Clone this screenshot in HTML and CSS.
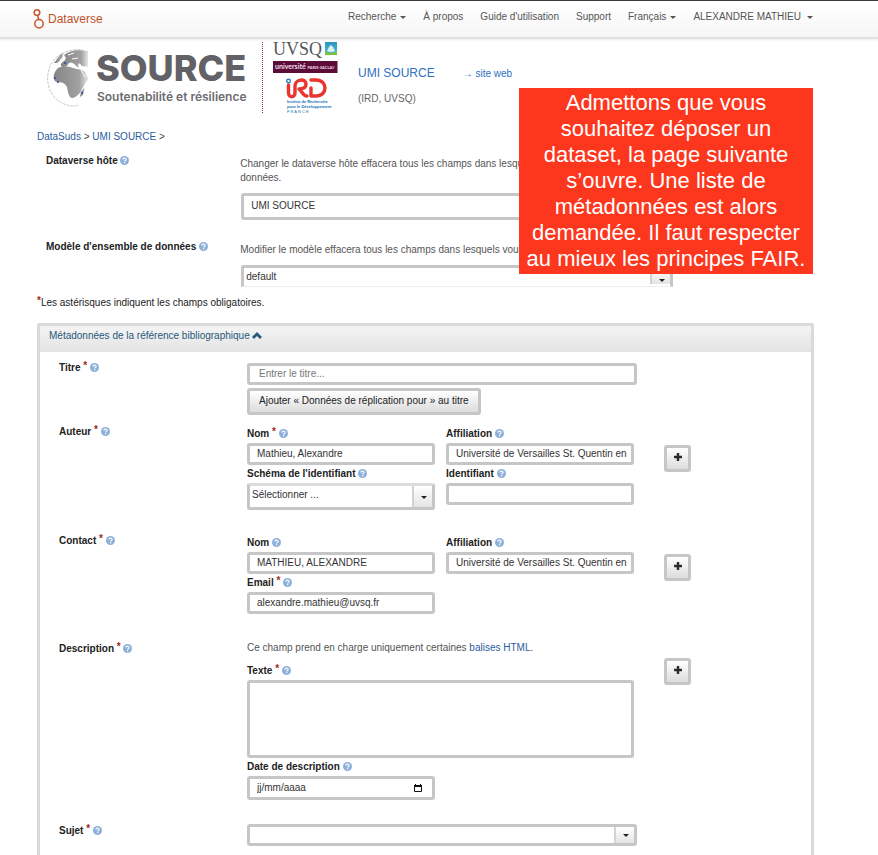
FILE: index.html
```html
<!DOCTYPE html>
<html lang="fr">
<head>
<meta charset="utf-8">
<meta name="viewport" content="width=device-width, initial-scale=1">
<title>Dataverse</title>
<link rel="stylesheet" href="styles.css">
</head>
<body>
<svg class="sprite" aria-hidden="true">
  <symbol id="help" viewBox="0 0 18 18">
    <circle cx="9" cy="9" r="9" fill="#8db0d9"/>
    <path d="M5.8 7.2C5.8 3.2 12.3 3.2 12.3 6.9C12.3 9 9.2 9 9.2 11" fill="none" stroke="#fff" stroke-width="2.2"/>
    <rect x="8" y="12.4" width="2.4" height="2.4" fill="#fff"/>
  </symbol>
  <symbol id="plus" viewBox="0 0 10 10">
    <path d="M5 1V9M1 5H9" fill="none" stroke="#2b2b2b" stroke-width="2.4"/>
  </symbol>
</svg>

<header class="topbar">
  <a class="brand" href="#">
    <svg class="brand-icon" viewBox="0 0 12 20" aria-hidden="true">
      <g fill="none" stroke="#c6532c" stroke-width="1.5">
        <circle cx="4" cy="3.6" r="2.8"/>
        <circle cx="6" cy="14.7" r="4.2"/>
        <path d="M4.6 6.4L5.6 10.5"/>
      </g>
    </svg>
    <span>Dataverse</span>
  </a>
  <nav class="menu">
    <a class="has-caret" href="#">Recherche</a>
    <a href="#">À propos</a>
    <a href="#">Guide d'utilisation</a>
    <a href="#">Support</a>
    <a class="has-caret" href="#">Français</a>
    <a class="has-caret has-caret-wide" href="#">ALEXANDRE MATHIEU</a>
  </nav>
</header>

<section class="banner">
  <svg class="logo" viewBox="0 0 296 78" role="img" aria-label="SOURCE, Soutenabilité et résilience">
    <defs>
      <linearGradient id="fade" x1="0" x2="1" y1="0" y2="0">
        <stop offset="0" stop-color="#858585"/>
        <stop offset="0.75" stop-color="#a2a2a2"/>
        <stop offset="1" stop-color="#e6e6e6"/>
      </linearGradient>
      <linearGradient id="sky" x1="0" x2="0" y1="0" y2="1">
        <stop offset="0" stop-color="#2c95bd"/>
        <stop offset="1" stop-color="#53c0da"/>
      </linearGradient>
    </defs>
    <path d="M43 12C30 6 13 12 6 24C-1 38 3 56 17 63C23 66 29 67 34 65" fill="none" stroke="#c9c9c9" stroke-width="1" stroke-dasharray="3 1"/>
    <g fill="url(#fade)">
      <path d="M19 15C25 10 34 9 43 12V27C40 25 38 28 36 25C34 22 32 24 34 28C30 25 27 21 24 23C22 27 18 28 16 26C15 22 20 22 21 18Z"/>
      <path d="M12 29C16 25 23 26 28 28C33 30 38 28 41 34C43 37 43 38 43 40C40 42 39 46 37 49C36 53 31 57 28 58C24 59 23 52 22 47C20 43 17 42 12 42C8 41 7 35 12 29Z"/>
      <path d="M36 52L40 47L38 55L35 57Z"/>
      <path d="M9 23L15 15L19 12L17 19L12 23Z"/>
    </g>
    <path d="M15 20L20 16M23 15L29 13M27 19L33 18M36 30L40 37" stroke="#fff" stroke-width="1" fill="none"/>
    <g fill="#1f4aa0"><circle cx="20" cy="23" r="1"/><circle cx="10" cy="38" r="1"/><circle cx="13" cy="42" r="1"/><circle cx="37" cy="53" r="1"/></g>
    <text class="logo-name" x="51" y="41">SOURCE</text>
    <text class="logo-tag" x="52" y="61">Soutenabilité et résilience</text>
    <path d="M217.500 2V74" stroke="#7b2a50" stroke-width="1" stroke-dasharray="1 1"/>
    <text class="logo-uvsq" x="228" y="15">UVSQ</text>
    <rect x="280" y="2" width="12" height="13" fill="url(#sky)"/>
    <path d="M280 11Q286 15 292 11V15H280Z" fill="#79c43c"/>
    <path d="M282 11L284 7L286 5L288 7L290 11Q286 13 282 11Z" fill="#d9f0f5"/>
    <rect x="228" y="21" width="64.500" height="12" fill="#5c0d37"/>
    <text class="logo-saclay" x="230" y="29">université <tspan class="logo-saclay-small">PARIS-SACLAY</tspan></text>
    <g fill="none" stroke="#e8352e" stroke-width="3.400" stroke-linecap="round" stroke-linejoin="round">
      <path d="M243.500 45V53C243.500 58 250 58 250 53V46C250 39 261 38 261 44C261 48 257 49 254 49C257 51 258 56 262 56"/>
      <path d="M266 48V56H271C283 56 283 40 271 40H266"/>
    </g>
    <circle cx="243.500" cy="41" r="1.800" fill="none" stroke="#1675b9" stroke-width="1.300"/>
    <text class="logo-ird" x="242" y="63">Institut de Recherche</text>
    <text class="logo-ird" x="242" y="68">pour le Développement</text>
    <text class="logo-france" x="242" y="73">F R A N C E</text>
  </svg>
  <div class="banner-text">
    <div class="banner-links">
      <a class="banner-title" href="#">UMI SOURCE</a>
      <a class="banner-site" href="#">→ site web</a>
    </div>
    <p class="banner-org">(IRD, UVSQ)</p>
  </div>
</section>

<main class="page">
  <nav class="crumbs"><a href="#">DataSuds</a> &gt; <a href="#">UMI SOURCE</a> &gt;</nav>

  <div class="host-row">
    <label class="row-label" for="host">Dataverse hôte <svg class="help"><use href="#help"/></svg></label>
    <div class="host-controls">
      <p class="host-hint">Changer le dataverse hôte effacera tous les champs dans lesquels vous avez peut-être entré des données.</p>
      <input class="field field-host" id="host" type="text" value="UMI SOURCE">
    </div>
  </div>
  <div class="host-row host-row-model">
    <label class="row-label" for="model">Modèle d'ensemble de données <svg class="help"><use href="#help"/></svg></label>
    <div class="host-controls">
      <p class="host-hint">Modifier le modèle effacera tous les champs dans lesquels vous avez entré des données.</p>
      <div class="picker picker-model">
        <select class="field" id="model"><option>default</option></select>
      </div>
    </div>
  </div>

  <p class="note"><span class="star">*</span>Les astérisques indiquent les champs obligatoires.</p>

  <section class="panel">
    <button class="panel-head" type="button">Métadonnées de la référence bibliographique
      <svg class="chevron" viewBox="0 0 10 7" aria-hidden="true"><path d="M1 6L5 2L9 6" fill="none" stroke="#27597a" stroke-width="2.800"/></svg>
    </button>
    <div class="panel-body">
      <div class="row row-title">
        <label class="row-label" for="title">Titre <span class="star">*</span> <svg class="help"><use href="#help"/></svg></label>
        <div class="controls">
          <input class="field field-title" id="title" type="text" placeholder="Entrer le titre...">
          <button class="btn" type="button">Ajouter « Données de réplication pour » au titre</button>
        </div>
      </div>

      <div class="row">
        <div class="row-label">Auteur <span class="star">*</span> <svg class="help"><use href="#help"/></svg></div>
        <div class="controls pair">
          <div>
            <label for="author-name">Nom <span class="star">*</span> <svg class="help"><use href="#help"/></svg></label>
            <input class="field" id="author-name" type="text" value="Mathieu, Alexandre">
          </div>
          <div>
            <label for="author-aff">Affiliation <svg class="help"><use href="#help"/></svg></label>
            <input class="field" id="author-aff" type="text" value="Université de Versailles St. Quentin en Yvelines">
          </div>
          <div>
            <label for="scheme">Schéma de l'identifiant <svg class="help"><use href="#help"/></svg></label>
            <div class="picker picker-tall">
              <select class="field" id="scheme"><option>Sélectionner ...</option></select>
            </div>
          </div>
          <div>
            <label for="ident">Identifiant <svg class="help"><use href="#help"/></svg></label>
            <input class="field" id="ident" type="text">
          </div>
        </div>
        <button class="add" type="button" aria-label="Ajouter"><svg><use href="#plus"/></svg></button>
      </div>

      <div class="row">
        <div class="row-label">Contact <span class="star">*</span> <svg class="help"><use href="#help"/></svg></div>
        <div class="controls pair">
          <div>
            <label for="contact-name">Nom <svg class="help"><use href="#help"/></svg></label>
            <input class="field" id="contact-name" type="text" value="MATHIEU, ALEXANDRE">
          </div>
          <div>
            <label for="contact-aff">Affiliation <svg class="help"><use href="#help"/></svg></label>
            <input class="field" id="contact-aff" type="text" value="Université de Versailles St. Quentin en Yvelines">
          </div>
          <div>
            <label for="email">Email <span class="star">*</span> <svg class="help"><use href="#help"/></svg></label>
            <input class="field" id="email" type="email" value="alexandre.mathieu@uvsq.fr">
          </div>
        </div>
        <button class="add" type="button" aria-label="Ajouter"><svg><use href="#plus"/></svg></button>
      </div>

      <div class="row row-description">
        <div class="row-label">Description <span class="star">*</span> <svg class="help"><use href="#help"/></svg></div>
        <div class="controls pair">
          <p class="hint wide">Ce champ prend en charge uniquement certaines <a href="#">balises HTML</a>.</p>
          <div class="wide">
            <label for="text">Texte <span class="star">*</span> <svg class="help"><use href="#help"/></svg></label>
            <textarea class="field field-text" id="text"></textarea>
          </div>
          <div>
            <label for="date">Date de description <svg class="help"><use href="#help"/></svg></label>
            <div class="date">
              <input class="field" id="date" type="text" placeholder="jj/mm/aaaa">
              <button class="date-button" type="button" aria-label="Choisir une date"><svg viewBox="0 0 8 8"><path d="M.5 1.500H7.500V7.500H.5Z" fill="none" stroke="#111"/><path d="M0 1H8V3H0ZM1 0H2V1H1ZM6 0H7V1H6Z" fill="#111"/></svg></button>
            </div>
          </div>
        </div>
        <button class="add" type="button" aria-label="Ajouter"><svg><use href="#plus"/></svg></button>
      </div>

      <div class="row">
        <label class="row-label" for="subject">Sujet <span class="star">*</span> <svg class="help"><use href="#help"/></svg></label>
        <div class="controls">
          <div class="picker picker-subject">
            <select class="field" id="subject"><option></option></select>
          </div>
        </div>
      </div>
    </div>
  </section>
</main>

<aside class="callout">Admettons que vous souhaitez déposer un dataset, la page suivante s’ouvre. Une liste de métadonnées est alors demandée. Il faut respecter au mieux les principes FAIR.</aside>
</body>
</html>
```
FILE: styles.css
```css
* {
  box-sizing: border-box;
}

body {
  position: relative;
  display: flex;
  flex-direction: column;
  min-height: 100vh;
  margin: 0;
  background: #fff;
  color: #222;
  font: 10px/14px "Liberation Sans", Arial, sans-serif;
}

p {
  margin: 0;
}

a {
  color: #2a5c9c;
  text-decoration: none;
}

input,
select,
textarea,
button {
  margin: 0;
  font: inherit;
  color: inherit;
}

.sprite {
  position: absolute;
  width: 0;
  height: 0;
}

/* Top bar */
.topbar {
  display: flex;
  justify-content: space-between;
  align-items: flex-start;
  height: 39px;
  margin-bottom: 1px;
  padding: 8px 65px 0 33px;
  border-top: 1px solid #3c3a3c;
  border-bottom: 2px solid #e0e0e0;
  background: linear-gradient(#fff, #f6f6f6);
  box-shadow: 0 1px 2px #eee;
}

.brand {
  display: flex;
  align-items: center;
  gap: 3px;
  color: #c1502a;
  font-size: 12px;
  line-height: 20px;
}

.brand-icon {
  width: 12px;
  height: 20px;
}

.menu {
  display: flex;
  gap: 17px;
  padding-top: 1px;
}

.menu a {
  display: flex;
  align-items: center;
  gap: 4px;
  color: #555;
}

.has-caret::after {
  content: "";
  border: 3px solid transparent;
  border-top-color: #555;
  border-bottom: 0;
}

.menu .has-caret-wide {
  gap: 6px;
}

/* Banner */
.banner {
  display: flex;
  gap: 17px;
  padding-left: 45px;
}

.logo {
  width: 296px;
  height: 78px;
}

.logo-name {
  font: 800 36px Inter, sans-serif;
  fill: #626266;
}

.logo-tag {
  font: 600 12px Inter, sans-serif;
  fill: #6c6c70;
}

.logo-uvsq {
  font: 18px "Liberation Serif", serif;
  fill: #55565a;
}

.logo-saclay {
  font: 700 7px Lato, sans-serif;
  fill: #f1dfe8;
}

.logo-saclay-small {
  font-size: 4px;
}

.logo-ird {
  font: 700 4px "Liberation Sans", sans-serif;
  fill: #1675b9;
}

.logo-france {
  font: 4px "Liberation Sans", sans-serif;
  fill: #1675b9;
}

.banner-text {
  padding-top: 24px;
}

.banner-links {
  display: flex;
  align-items: baseline;
  gap: 28px;
}

.banner-links a {
  color: #2f6fc1;
}

.banner-title {
  font-size: 12px;
  line-height: 18px;
}

.banner-org {
  padding-top: 10px;
  color: #666;
}

/* Page */
.page {
  display: flex;
  flex: 1;
  flex-direction: column;
  padding: 12px 64px 0 37px;
}

.crumbs {
  color: #444;
}

.row-label,
label {
  font-weight: 700;
}

.help {
  width: 9px;
  height: 9px;
  vertical-align: -1px;
}

.star {
  color: #a02622;
  font-weight: 700;
  vertical-align: 2px;
  line-height: 1;
}

.host-row {
  display: grid;
  grid-template-columns: 194fr 432fr 141fr;
  padding-left: 9px;
}

.host-row .row-label {
  padding-top: 10px;
}

.host-hint {
  padding: 13px 0 8px;
  color: #555;
}

.host-row-model {
  padding-top: 10px;
}

/* Form fields */
.field {
  display: block;
  width: 100%;
  height: 22px;
  padding: 0 7px 2px;
  border: 3px solid #c6c6c6;
  border-radius: 3px;
  outline: 0;
  background: #fff;
  color: #333;
}

.field::placeholder {
  color: #777;
  opacity: 1;
}

.field-host {
  width: calc(100% - 1px);
  height: 27px;
  margin-left: 1px;
}

.picker {
  position: relative;
}

.picker::before {
  content: "";
  position: absolute;
  top: 3px;
  right: 3px;
  bottom: 3px;
  width: 18px;
  border-left: 2px solid #d2d2d2;
  background: linear-gradient(#fff, #e4e4e4);
  pointer-events: none;
}

.picker::after {
  content: "";
  position: absolute;
  right: 8px;
  bottom: 9px;
  border: 3px solid transparent;
  border-top-color: #222;
  border-bottom: 0;
  pointer-events: none;
}

.picker select {
  appearance: none;
  padding: 0 20px 0 2px;
}

.picker-model {
  margin-left: 1px;
}

.picker-model .field {
  border-bottom: 1px solid #eee;
  border-radius: 3px 3px 0 0;
}

.picker-model::after {
  bottom: 5px;
}

.picker-tall .field {
  height: 27px;
  padding-bottom: 4px;
  border-top-color: #dcdcdc;
}

.picker-tall::after {
  bottom: 11px;
}

.note {
  padding: 9px 0 13px;
}

/* Metadata panel */
.panel {
  flex: 1;
  border: 3px solid #dadada;
  border-bottom: 0;
  border-radius: 3px 3px 0 0;
}

.panel-head {
  display: block;
  width: 100%;
  height: 26px;
  padding: 0 9px 6px;
  border: 0;
  background: linear-gradient(#f4f4f4, #e3e3e3);
  color: #27597a;
  text-align: left;
}

.chevron {
  width: 10px;
  height: 7px;
}

.panel-body {
  display: flex;
  flex-direction: column;
  gap: 24px;
  padding: 9px 0 9px 19px;
}

.row {
  display: grid;
  grid-template-columns: 188fr 390fr 174fr;
  align-items: start;
}

.row .row-label {
  line-height: 10px;
}

.row-title {
  margin-bottom: -14px;
}

.row-title .controls {
  padding-top: 2px;
}

.row-description > .row-label {
  padding-top: 4px;
}

.controls label {
  display: block;
  height: 18px;
  line-height: 18px;
}

.pair {
  display: grid;
  grid-template-columns: 1fr 1fr;
  column-gap: 11px;
  padding-right: 3px;
}

.pair .field {
  padding-right: 2px;
}

.wide {
  grid-column: 1 / -1;
}

.hint {
  padding-bottom: 4px;
  color: #555;
  line-height: 20px;
}

.field-title {
  padding-left: 9px;
}

.field-text {
  height: 78px;
  resize: none;
}

.btn,
.add {
  border: 3px solid #c6c6c6;
  border-radius: 3px;
  background: linear-gradient(#fff, #dcdcdc);
}

.btn {
  height: 27px;
  margin-top: 3px;
  padding: 0 9px 2px;
}

.add {
  width: 27px;
  height: 27px;
  margin: 20px 0 0 27px;
  padding: 0;
}

.add svg {
  display: block;
  width: 10px;
  height: 10px;
  margin: 0 auto 3px;
}

.date {
  position: relative;
}

.date .field {
  height: 24px;
}

.date .field::placeholder {
  color: #333;
}

.date-button {
  position: absolute;
  top: 8px;
  right: 13px;
  width: 8px;
  height: 8px;
  padding: 0;
  border: 0;
  background: none;
}

.date-button svg {
  display: block;
  width: 8px;
  height: 8px;
}

/* Note laid over the page */
.callout {
  position: absolute;
  top: 88px;
  right: 65px;
  width: 294px;
  padding: 2px;
  background: #fd361e;
  color: #fff;
  font-size: 22px;
  line-height: 26px;
  text-align: center;
}
```
